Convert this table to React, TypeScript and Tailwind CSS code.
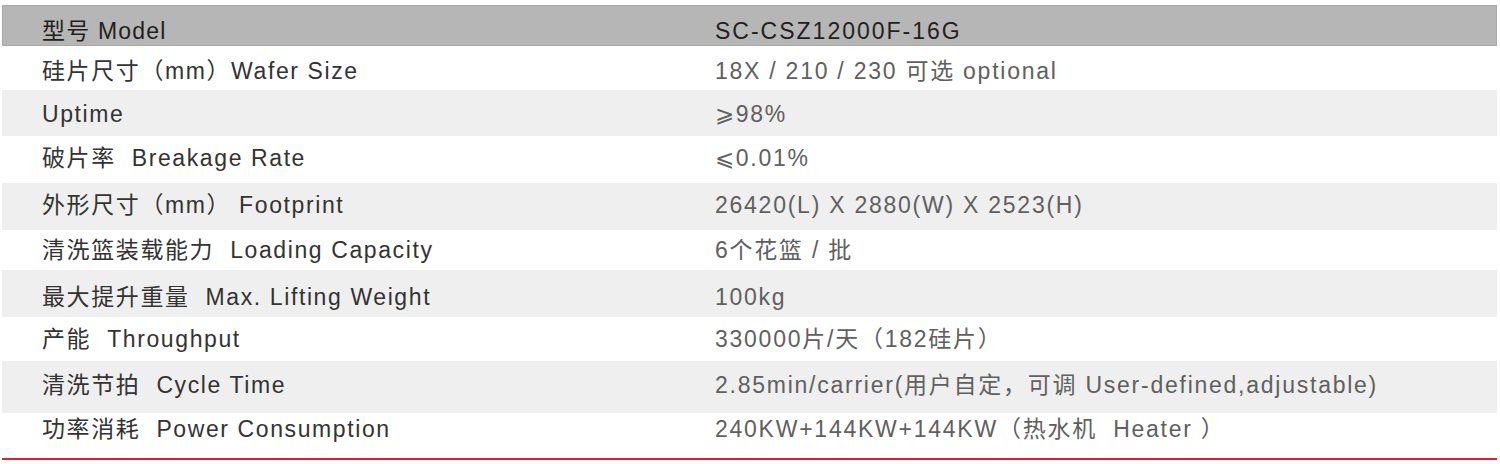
const ROWS: { label: string; value: string; h: string; bg: string }[] = [
  { label: "硅片尺寸（mm）Wafer Size", value: "18X / 210 / 230 可选 optional", h: "h-[44px] pt-[6px]", bg: "bg-white" },
  { label: "Uptime", value: "⩾98%", h: "h-[46px] pt-[2px]", bg: "bg-[#eeefee]" },
  { label: "破片率  Breakage Rate", value: "⩽0.01%", h: "h-[47px] pb-[2px]", bg: "bg-white" },
  { label: "外形尺寸（mm） Footprint", value: "26420(L) X 2880(W) X 2523(H)", h: "h-[47px] pb-[2px]", bg: "bg-[#eeefee]" },
  { label: "清洗篮装载能力  Loading Capacity", value: "6个花篮 / 批", h: "h-[40px]", bg: "bg-white" },
  { label: "最大提升重量  Max. Lifting Weight", value: "100kg", h: "h-[47px] pt-[8px]", bg: "bg-[#eeefee]" },
  { label: "产能  Throughput", value: "330000片/天（182硅片）", h: "h-[44px]", bg: "bg-white" },
  { label: "清洗节拍  Cycle Time", value: "2.85min/carrier(用户自定，可调 User-defined,adjustable)", h: "h-[52px] pb-[4px]", bg: "bg-[#eeefee]" },
  { label: "功率消耗  Power Consumption", value: "240KW+144KW+144KW（热水机  Heater ）", h: "h-[45px] pb-[12px]", bg: "bg-white" },
];

export default function App() {
  return (
    <div
      className="w-[1500px] h-[464px] bg-white pt-[5px] pl-[2px] pr-[3px] text-[23px] whitespace-pre"
      style={{ fontFamily: '"Liberation Sans", "Noto Sans CJK SC", sans-serif' }}
    >
      <div className="flex h-[41px] items-center bg-[#b5b6b5] border border-[#a8a9a8] pt-[11px] text-[#231f20]">
        <div className="w-[712px] pl-[39px] tracking-[1.2px]">型号 Model</div>
        <div className="flex-1 tracking-[2px]">SC-CSZ12000F-16G</div>
      </div>
      {ROWS.map((r) => (
        <div key={r.label} className={`flex items-center ${r.h} ${r.bg}`}>
          <div className="w-[713px] pl-[40px] text-[#333333] tracking-[1.6px]">{r.label}</div>
          <div className="flex-1 text-[#606060] tracking-[1.75px]">{r.value}</div>
        </div>
      ))}
      <div className="h-[2px] bg-[#d8222d]" />
    </div>
  );
}
